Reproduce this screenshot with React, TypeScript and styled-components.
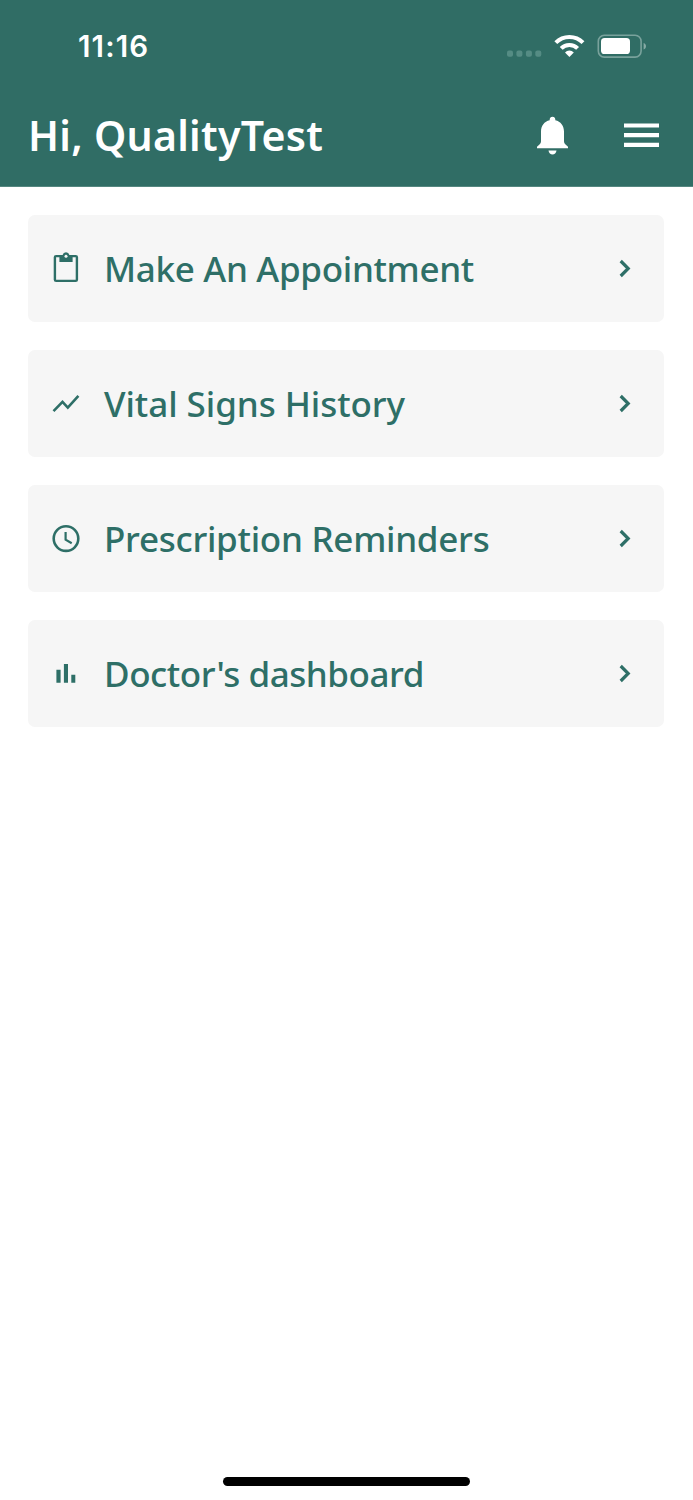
import React from "react";
import styled, { createGlobalStyle } from "styled-components";

interface MenuItem {
  label: string;
  icon: React.ReactNode;
  spacing: number;
}

const ClipboardIcon = () => (
  <>
    <rect x="4.9" y="4.1" width="22" height="24.8" rx="1.2" strokeWidth="2.4" />
    <path
      d="M9.4 3h3.2a3.5 3.5 0 0 1 6.8 0h3.2v7H9.4z"
      fill="currentColor"
      stroke="none"
    />
    <circle cx="16" cy="4.2" r="1.5" fill="#f6f6f6" stroke="none" />
  </>
);

const TrendIcon = () => <path d="M3.5 24.1 12.5 14.9 17.8 20.6 28.4 8.8" />;

const ClockIcon = () => (
  <>
    <circle cx="16" cy="16.6" r="12.3" />
    <path d="M15.6 9.9V17.6L21.7 21.2" strokeWidth="2.2" />
  </>
);

const BarsIcon = () => (
  <path
    d="M6.4 12.7h4.2v13H6.4zM13.9 7h4.1v18.7h-4.1zM21.3 17.7h4v8h-4z"
    fill="currentColor"
    stroke="none"
  />
);

const items: MenuItem[] = [
  { label: "Make An Appointment", icon: <ClipboardIcon />, spacing: -0.32 },
  { label: "Vital Signs History", icon: <TrendIcon />, spacing: -0.06 },
  { label: "Prescription Reminders", icon: <ClockIcon />, spacing: -0.27 },
  { label: "Doctor's dashboard", icon: <BarsIcon />, spacing: -0.45 },
];

const StatusIcons = () => (
  <StatusSvg viewBox="0 0 142 28">
    <g fill="#558c84">
      <rect x="1" y="18.6" width="6" height="6.2" rx="2" />
      <rect x="10.4" y="18.6" width="6" height="6.2" rx="2" />
      <rect x="19.9" y="18.6" width="6" height="6.2" rx="2" />
      <rect x="29.3" y="18.6" width="6" height="6.2" rx="2" />
    </g>
    <g fill="none" stroke="#fff" strokeWidth="4">
      <path d="M49.8 10.7a19 19 0 0 1 27.2 0" />
      <path d="M55.2 16.4a11.4 11.4 0 0 1 16.4 0" />
    </g>
    <path d="M63.4 25 59 20.4a6.3 6.3 0 0 1 8.8 0z" fill="#fff" />
    <rect
      x="92.3"
      y="3.3"
      width="42.8"
      height="21.8"
      rx="6"
      fill="none"
      stroke="#79a29c"
      strokeWidth="1.6"
    />
    <rect x="95" y="6" width="29" height="16" rx="3.6" fill="#fff" />
    <path d="M137.6 11v6.6c3.2-1.2 3.2-5.4 0-6.6z" fill="#86aaa5" />
  </StatusSvg>
);

const App: React.FC = () => {
  return (
    <Screen>
      <GlobalStyle />
      <Header>
        <StatusBar>
          <Time>11:16</Time>
          <StatusIcons />
        </StatusBar>
        <TitleBar>
          <Greeting>Hi, QualityTest</Greeting>
          <Actions>
            <IconButton aria-label="Notifications">
              <svg width="32" height="40" viewBox="0 0 32 40">
                <path
                  d="M15.5 1.7c1.7 0 2.8 1.2 2.8 2.8v.8c5.4 1.3 8.7 5.5 8.7 11.3v9.7c0 1.6.7 2.5 1.8 3.5l2.2 2v1.4H0v-1.4l2.2-2c1.1-1 1.8-1.9 1.8-3.5v-9.7C4 10.8 7.3 6.6 12.7 5.3v-.8c0-1.6 1.1-2.8 2.8-2.8z"
                  fill="#fff"
                />
                <path
                  d="M11.5 35.5h8c-.4 2.5-2 4-4 4s-3.6-1.5-4-4z"
                  fill="#fff"
                />
              </svg>
            </IconButton>
            <IconButton aria-label="Menu">
              <svg width="36" height="40" viewBox="0 0 36 40">
                <path
                  d="M0 8.4h35v4.2H0zM0 18h35v4.2H0zM0 27.7h35v4.2H0z"
                  fill="#fff"
                />
              </svg>
            </IconButton>
          </Actions>
        </TitleBar>
      </Header>
      <Menu>
        {items.map(({ label, icon, spacing }) => (
          <Card key={label}>
            <CardIcon viewBox="0 0 32 33">{icon}</CardIcon>
            <CardLabel $spacing={spacing}>{label}</CardLabel>
            <Chevron viewBox="0 0 16 21">
              <path d="M3.7 3 11.2 10.5 3.7 18" />
            </Chevron>
          </Card>
        ))}
      </Menu>
      <HomeIndicator />
    </Screen>
  );
};

export default App;

const GlobalStyle = createGlobalStyle`
  body {
    margin: 0;
    background-color: #fff;
  }
`;

const Screen = styled.div`
  display: flex;
  flex-direction: column;
  width: 693px;
  height: 1500px;
  overflow: hidden;
  font-family: "Noto Sans", sans-serif;
`;

const Header = styled.header`
  box-sizing: border-box;
  height: 187px;
  background-color: #306d65;
  border-bottom: 1px solid #558780;
`;

const StatusBar = styled.div`
  display: flex;
  align-items: center;
  justify-content: space-between;
  box-sizing: border-box;
  height: 92px;
  padding: 0 45px 0 78px;
`;

const Time = styled.div`
  font: 600 29.5px/36px Inter, sans-serif;
  letter-spacing: 1.1px;
  color: #fff;
`;

const StatusSvg = styled.svg`
  width: 142px;
  height: 28px;
`;

const TitleBar = styled.div`
  display: flex;
  align-items: center;
  justify-content: space-between;
  height: 86px;
  padding: 0 33px 0 28px;
`;

const Greeting = styled.h1`
  margin: 0;
  font-size: 41px;
  font-weight: 600;
  line-height: 56px;
  letter-spacing: 0.3px;
  white-space: nowrap;
  color: #fff;
`;

const Actions = styled.div`
  display: flex;
  gap: 55px;
`;

const IconButton = styled.button`
  display: flex;
  padding: 0;
  border: 0;
  background: none;
`;

const Menu = styled.main`
  display: flex;
  flex-direction: column;
  gap: 28px;
  padding: 28px 29px 0 28px;
`;

const Card = styled.div`
  display: flex;
  align-items: center;
  box-sizing: border-box;
  height: 107px;
  padding: 0 31px 0 22px;
  border-radius: 7px;
  background-color: #f6f6f6;
  color: #2e6f67;
`;

const CardIcon = styled.svg`
  width: 32px;
  height: 33px;
  fill: none;
  stroke: currentColor;
  stroke-width: 2.6;
`;

const CardLabel = styled.div<{ $spacing: number }>`
  flex: 1;
  margin-left: 22px;
  font-size: 35px;
  font-weight: 500;
  line-height: 49px;
  letter-spacing: ${({ $spacing }) => $spacing}px;
  white-space: nowrap;
`;

const Chevron = styled.svg`
  width: 16px;
  height: 21px;
  fill: none;
  stroke: currentColor;
  stroke-width: 3.2;
`;

const HomeIndicator = styled.div`
  width: 247px;
  height: 9px;
  margin: auto auto 14px;
  border-radius: 5px;
  background-color: #000;
`;
